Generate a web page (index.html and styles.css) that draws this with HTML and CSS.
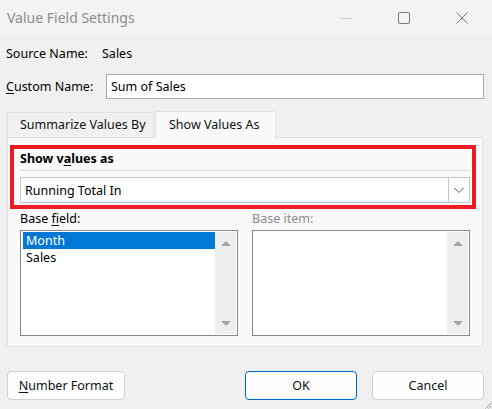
FILE: index.html
```html
<!DOCTYPE html>
<html>
<head>
<meta charset="utf-8">
<link rel="stylesheet" href="styles.css">
</head>
<body>
<div class="window">
  <div class="titlebar">
    <span class="title">Value Field Settings</span>
    <div class="controls">
      <span class="ctl min"><svg width="14" height="14" viewBox="0 0 14 14"><path d="M1 7.5h12" stroke="#d0d0d0" stroke-width="1"/></svg></span>
      <span class="ctl max"><svg width="14" height="14" viewBox="0 0 14 14"><rect x="1.5" y="1.5" width="11" height="11" rx="1.5" fill="none" stroke="#777" stroke-width="1"/></svg></span>
      <span class="ctl close"><svg width="14" height="14" viewBox="0 0 14 14"><path d="M1.5 1.5l11 11M12.5 1.5l-11 11" stroke="#777" stroke-width="1"/></svg></span>
    </div>
  </div>

  <div class="body">
    <div class="row source">
      <span class="lbl">Source Name:</span>
      <span class="val">Sales</span>
    </div>
    <div class="row custom">
      <span class="lbl"><u>C</u>ustom Name:</span>
      <div class="input">Sum of Sales</div>
    </div>

    <div class="tabs">
      <div class="tab">Summarize Values By</div>
      <div class="tab active">Show Values As</div>
    </div>

    <div class="panel">
      <div class="redbox">
        <div class="group-title">Show v<u>a</u>lues as</div>
        <div class="sep"></div>
        <div class="select">
          <span class="select-text">Running Total In</span>
          <span class="select-btn"><svg width="12" height="8" viewBox="0 0 12 8"><path d="M1.5 2l4.5 4.5L10.5 2" fill="none" stroke="#555" stroke-width="1"/></svg></span>
        </div>
      </div>

      <div class="lists">
        <div class="listcol">
          <div class="list-label">Base <u>f</u>ield:</div>
          <div class="listbox">
            <div class="items">
              <div class="item selected">Month</div>
              <div class="item">Sales</div>
            </div>
            <div class="scroll">
              <span class="arrow up"></span>
              <span class="arrow down"></span>
            </div>
          </div>
        </div>
        <div class="listcol">
          <div class="list-label disabled">Base item:</div>
          <div class="listbox">
            <div class="items"></div>
            <div class="scroll">
              <span class="arrow up"></span>
              <span class="arrow down"></span>
            </div>
          </div>
        </div>
      </div>
    </div>

    <div class="buttons">
      <div class="btn numfmt"><u>N</u>umber Format</div>
      <div class="spacer"></div>
      <div class="btn ok">OK</div>
      <div class="btn cancel">Cancel</div>
    </div>
  </div>
  <svg class="grip" width="8" height="8" viewBox="0 0 8 8"><path d="M7.5 1.5L1.5 7.5M7.5 4.5L4.5 7.5" stroke="#999" stroke-width="1"/></svg>
</div>
</body>
</html>
```

FILE: styles.css
```css
* { box-sizing: border-box; }
html, body {
  margin: 0;
  padding: 0;
}
body {
  width: 492px;
  height: 409px;
  overflow: hidden;
  background: #f0f0f0;
  font-family: "Noto Sans", "Open Sans", sans-serif;
  font-size: 12.5px;
  color: #000;
}
u { text-decoration: underline; text-underline-offset: 2px; }

.window {
  position: relative;
  width: 492px;
  height: 409px;
  background: #f0f0f0;
}

.titlebar {
  height: 35px;
  background: #f3f3f3;
  display: flex;
  align-items: center;
  padding-left: 7px;
}
.title {
  font-size: 14px;
  color: #8c8c8c;
  margin-top: -1px;
}
.controls {
  margin-left: auto;
  display: flex;
  align-items: center;
  height: 100%;
}
.ctl {
  width: 46px;
  display: flex;
  justify-content: center;
  align-items: center;
}
.ctl svg { display: block; }
.ctl.min { margin-right: 11px; }
.ctl.max { margin-right: 12px; }
.ctl.close { margin-right: 7px; }

.body {
  padding: 0 8px 0 7px;
}
.row {
  display: flex;
  align-items: center;
}
.row.source {
  height: 19px;
  margin-top: 9px;
}
.row .lbl { width: 96px; padding-left: 0; margin-left: -1px; }
.row.custom {
  margin-top: 10px;
  height: 26px;
}
.row.custom .lbl { width: 100px; }
.input {
  width: 378px;
  height: 25px;
  background: #fff;
  border: 1px solid #a9a9a9;
  padding-left: 4px;
  line-height: 23px;
}

.tabs {
  display: flex;
  align-items: flex-end;
  margin-top: 10px;
  height: 28px;
}
.tab {
  width: 147px;
  height: 25px;
  line-height: 24px;
  padding: 0 0 0 12px;
  border: 1px solid #e1e1e1;
  border-bottom: none;
  background: #f0f0f0;
  color: #111;
  white-space: nowrap;
}
.tab.active {
  width: 121px;
  height: 27px;
  line-height: 26px;
  background: #f9f9f9;
  padding: 0 0 0 13px;
  margin-left: 1px;
  position: relative;
  top: 1px;
}

.panel {
  width: 476px;
  height: 210px;
  background: #f9f9f9;
  border: 1px solid #e1e1e1;
  padding: 7px 0 0 2px;
}
.redbox {
  width: 466px;
  height: 64px;
  border: 4px solid #ed1c24;
  padding: 0 2px 0 6px;
}
.group-title {
  font-weight: bold;
  height: 21px;
  line-height: 20px;
}
.sep {
  height: 1px;
  background: #dadada;
  margin-bottom: 6px;
}
.select {
  height: 26px;
  background: #fff;
  border: 1px solid #c4c4c4;
  display: flex;
  align-items: stretch;
}
.select-text {
  flex: 1;
  padding-left: 4px;
  line-height: 25px;
}
.select-btn {
  width: 21px;
  border-left: 1px solid #c4c4c4;
  display: flex;
  align-items: center;
  justify-content: center;
}

.lists {
  display: flex;
  gap: 14px;
  padding-left: 10px;
}
.listcol { width: 218px; }
.list-label {
  height: 21px;
  line-height: 20px;
  margin-bottom: 0;
}
.list-label.disabled { color: #8d8d8d; }
.listbox {
  height: 106px;
  background: #fff;
  border: 1px solid #828790;
  display: flex;
  padding: 1px 1px 1px 1px;
}
.items {
  flex: 1;
  padding-left: 1px;
}
.item {
  height: 17px;
  line-height: 17px;
  padding-left: 3px;
}
.item.selected {
  background: #0078d4;
  color: #fff;
  margin-right: 0;
}
.scroll {
  width: 21px;
  background: #eeeeee;
  display: flex;
  flex-direction: column;
  justify-content: space-between;
  align-items: center;
  padding: 9px 0 8px;
}
.arrow {
  width: 0;
  height: 0;
  border-left: 5px solid transparent;
  border-right: 5px solid transparent;
}
.arrow.up { border-bottom: 5px solid #a3a3a3; }
.arrow.down { border-top: 5px solid #a3a3a3; }

.buttons {
  display: flex;
  margin-top: 24px;
  gap: 15px;
}
.spacer { flex: 1; }
.btn {
  height: 29px;
  line-height: 27px;
  text-align: center;
  background: #fdfdfd;
  border: 1px solid #d0d0d0;
  border-radius: 4px;
  color: #111;
}
.btn.numfmt { width: 118px; }
.btn.ok { width: 112px; border-color: #0067c0; }
.btn.cancel { width: 112px; }

.grip {
  position: absolute;
  right: 0;
  bottom: 0;
}
```
